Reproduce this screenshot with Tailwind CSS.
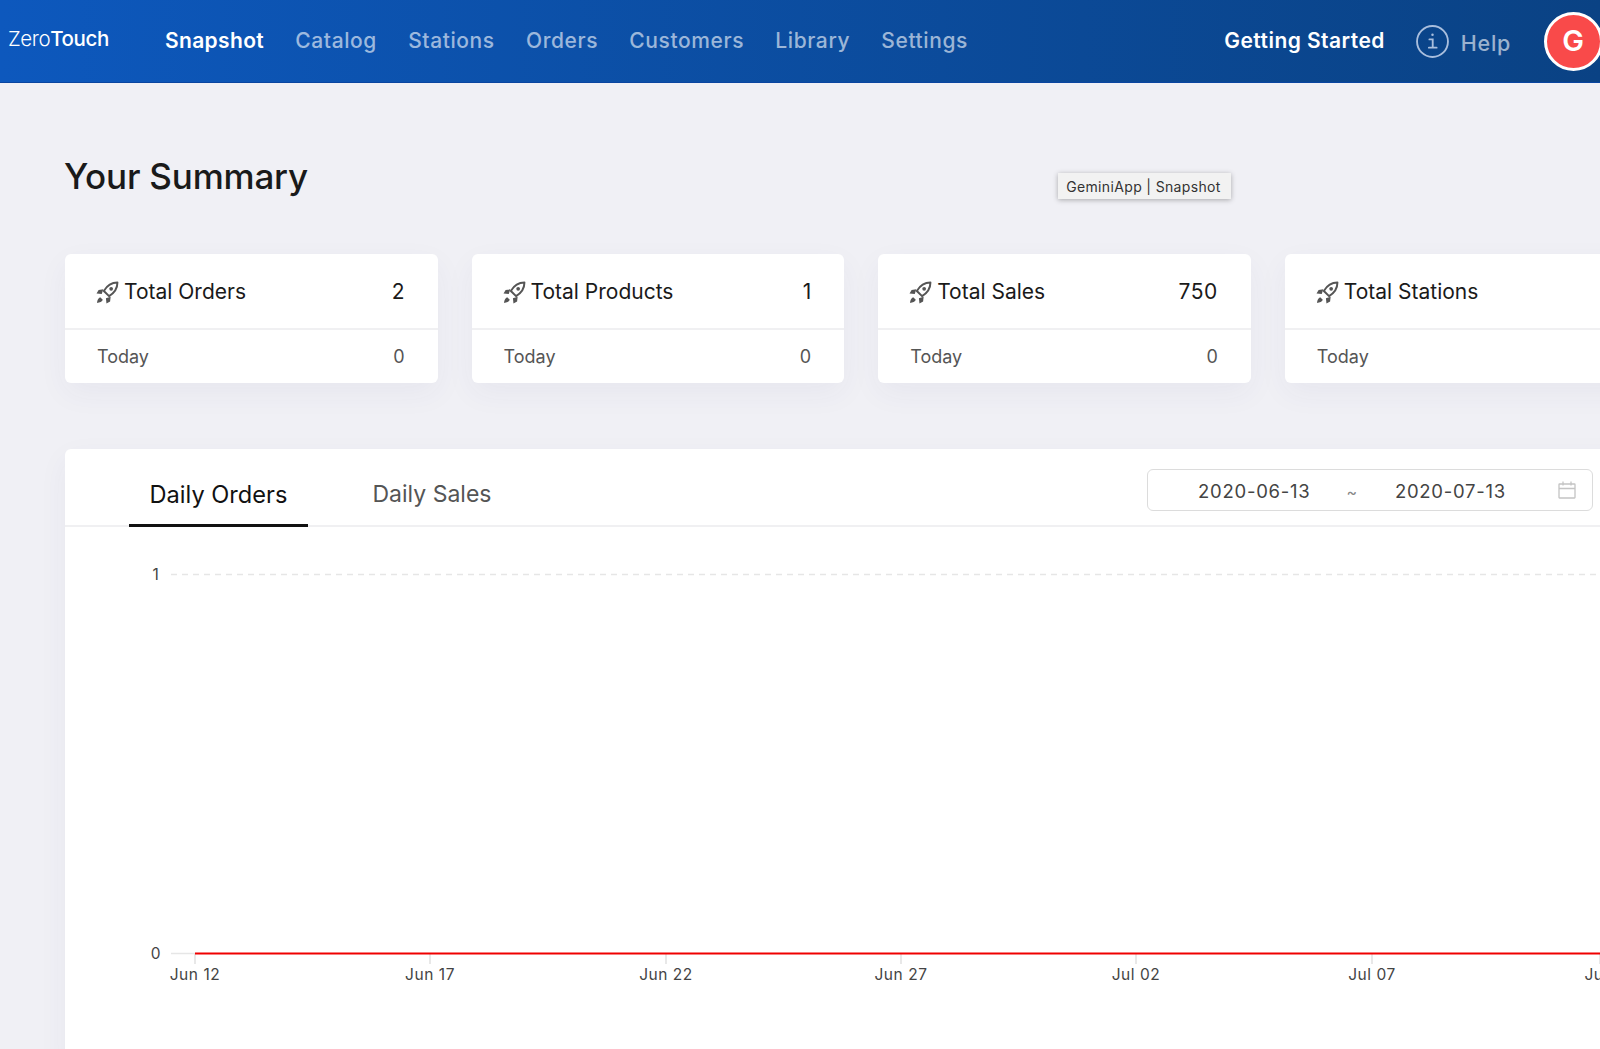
<!DOCTYPE html>
<html><head><meta charset="utf-8"><script src="https://cdn.jsdelivr.net/npm/@tailwindcss/browser@4"></script></head>
<body class="m-0 font-['Inter','Liberation_Sans',sans-serif]">
<div class="relative w-[1600px] h-[1049px] overflow-hidden bg-[#f0f0f5]">
  <header class="h-[83px] flex items-center pl-[8px] bg-gradient-to-r from-[#0d58bd] to-[#0a4284] border-b border-[#0a45a0]">
    <div class="w-[157px] shrink-0 text-[20.5px] text-white tracking-[-0.4px] leading-none -mt-[4px]"><span class="font-light">Zero</span><span class="font-medium">Touch</span></div>
    <nav class="flex items-center gap-[31.2px] text-[21px] font-medium tracking-[0.6px] text-white/60">
      <span class="text-white font-semibold tracking-[0.35px]">Snapshot</span><span>Catalog</span><span>Stations</span><span>Orders</span><span>Customers</span><span>Library</span><span>Settings</span>
    </nav>
    <div class="ml-auto flex items-center shrink-0 -mr-[3px]">
      <span class="text-[21px] font-semibold text-white tracking-[0.45px]">Getting Started</span>
      <svg class="ml-[31px]" width="33" height="33" viewBox="0 0 32 32" fill="none" stroke="#a9bedd" stroke-width="1.8"><circle cx="16" cy="16" r="15"/><path d="M13 14h3.2v8M12.5 22h7.5" stroke-linecap="round"/><circle cx="16" cy="9.5" r="1.2" fill="#a9bedd" stroke="none"/></svg>
      <span class="ml-[12px] mt-[4px] text-[21.5px] font-medium text-white/60 tracking-[0.7px]">Help</span>
      <div class="ml-[33px] w-[59px] h-[59px] pr-[1px] rounded-full border-[3px] border-white bg-[#f94a4a] flex items-center justify-center text-white text-[29px] font-semibold">G</div>
    </div>
  </header>

  <main class="pl-[65px]">
    <h1 class="pt-[70px] -ml-[1px] text-[35px] leading-[46px] font-medium text-[#1a1a1a] tracking-[-0.2px]">Your Summary</h1>
    <div class="absolute left-[1058px] top-[173px] h-[26px] w-[173px] pr-[2px] flex items-center justify-center bg-[#f2f2f2] shadow-[0_1px_5px_rgba(0,0,0,0.3)] text-[14px] text-[#333] tracking-[0.35px]">GeminiApp | Snapshot</div>

    <section class="mt-[55px] flex gap-[34px] w-[1700px]">
      <div class="w-[372.6px] h-[129px] shrink-0 bg-white rounded-[6px] shadow-[0_10px_30px_rgba(60,60,120,0.05)]">
        <div class="h-[76px] pt-[2px] border-b-2 border-[#f0f0f2] pl-[32px] pr-[33px] flex items-center justify-between text-[21px] text-[#1a1a1a]"><span class="flex items-center gap-[5px] -ml-[1px]"><svg width="23" height="23" viewBox="0 0 22 22" fill="#555"><path d="M20.5 1.5C15 1.5 10.5 4.5 7.5 9.5L12.5 14.5C17.5 11.5 20.5 7 20.5 1.5Z" fill="none" stroke="#555" stroke-width="1.9" stroke-linejoin="round"/><circle cx="14.5" cy="7.5" r="1.8"/><path d="M7 8 2.5 8.5.5 12 5.5 12.5ZM14 15 13.5 19.5 10 21.5 9.5 16.5ZM4 15.5C2.5 16 1 18.5 1 21 3.5 21 6 19.5 6.5 18Z"/></svg>Total Orders</span><span>2</span></div>
        <div class="h-[53px] pl-[32px] pr-[33px] flex items-center justify-between text-[18px] text-[#555]"><span>Today</span><span>0</span></div>
      </div>
      <div class="w-[372.6px] h-[129px] shrink-0 bg-white rounded-[6px] shadow-[0_10px_30px_rgba(60,60,120,0.05)]">
        <div class="h-[76px] pt-[2px] border-b-2 border-[#f0f0f2] pl-[32px] pr-[33px] flex items-center justify-between text-[21px] text-[#1a1a1a]"><span class="flex items-center gap-[5px] -ml-[1px]"><svg width="23" height="23" viewBox="0 0 22 22" fill="#555"><path d="M20.5 1.5C15 1.5 10.5 4.5 7.5 9.5L12.5 14.5C17.5 11.5 20.5 7 20.5 1.5Z" fill="none" stroke="#555" stroke-width="1.9" stroke-linejoin="round"/><circle cx="14.5" cy="7.5" r="1.8"/><path d="M7 8 2.5 8.5.5 12 5.5 12.5ZM14 15 13.5 19.5 10 21.5 9.5 16.5ZM4 15.5C2.5 16 1 18.5 1 21 3.5 21 6 19.5 6.5 18Z"/></svg>Total Products</span><span>1</span></div>
        <div class="h-[53px] pl-[32px] pr-[33px] flex items-center justify-between text-[18px] text-[#555]"><span>Today</span><span>0</span></div>
      </div>
      <div class="w-[372.6px] h-[129px] shrink-0 bg-white rounded-[6px] shadow-[0_10px_30px_rgba(60,60,120,0.05)]">
        <div class="h-[76px] pt-[2px] border-b-2 border-[#f0f0f2] pl-[32px] pr-[33px] flex items-center justify-between text-[21px] text-[#1a1a1a]"><span class="flex items-center gap-[5px] -ml-[1px]"><svg width="23" height="23" viewBox="0 0 22 22" fill="#555"><path d="M20.5 1.5C15 1.5 10.5 4.5 7.5 9.5L12.5 14.5C17.5 11.5 20.5 7 20.5 1.5Z" fill="none" stroke="#555" stroke-width="1.9" stroke-linejoin="round"/><circle cx="14.5" cy="7.5" r="1.8"/><path d="M7 8 2.5 8.5.5 12 5.5 12.5ZM14 15 13.5 19.5 10 21.5 9.5 16.5ZM4 15.5C2.5 16 1 18.5 1 21 3.5 21 6 19.5 6.5 18Z"/></svg>Total Sales</span><span class="tracking-[0.5px]">750</span></div>
        <div class="h-[53px] pl-[32px] pr-[33px] flex items-center justify-between text-[18px] text-[#555]"><span>Today</span><span>0</span></div>
      </div>
      <div class="w-[372.6px] h-[129px] shrink-0 bg-white rounded-[6px] shadow-[0_10px_30px_rgba(60,60,120,0.05)]">
        <div class="h-[76px] pt-[2px] border-b-2 border-[#f0f0f2] pl-[32px] pr-[33px] flex items-center justify-between text-[21px] text-[#1a1a1a]"><span class="flex items-center gap-[5px] -ml-[1px]"><svg width="23" height="23" viewBox="0 0 22 22" fill="#555"><path d="M20.5 1.5C15 1.5 10.5 4.5 7.5 9.5L12.5 14.5C17.5 11.5 20.5 7 20.5 1.5Z" fill="none" stroke="#555" stroke-width="1.9" stroke-linejoin="round"/><circle cx="14.5" cy="7.5" r="1.8"/><path d="M7 8 2.5 8.5.5 12 5.5 12.5ZM14 15 13.5 19.5 10 21.5 9.5 16.5ZM4 15.5C2.5 16 1 18.5 1 21 3.5 21 6 19.5 6.5 18Z"/></svg>Total Stations</span></div>
        <div class="h-[53px] pl-[32px] pr-[33px] flex items-center justify-between text-[18px] text-[#555]"><span>Today</span></div>
      </div>
    </section>

    <section class="mt-[66px] w-[1600px] h-[620px] bg-white rounded-[6px] shadow-[0_10px_30px_rgba(60,60,120,0.05)]">
      <div class="h-[78px] border-b-2 border-[#f0f0f2] pl-[64px] flex relative">
        <div class="w-[179px] h-[78px] border-b-[3px] border-[#111] flex items-center justify-center pt-[17px] text-[23.6px] text-[#111]">Daily Orders</div>
        <div class="ml-[64.5px] h-[78px] flex items-center pt-[13px] text-[23px] text-[#555]">Daily Sales</div>
        <div class="absolute left-[1082px] top-[20px] w-[446px] h-[42px] border-[1.5px] border-[#dcdcdc] rounded-[6px] flex items-center pt-[3px] text-[18.5px] text-[#444] tracking-[0.75px]">
          <span class="ml-[50px]">2020-06-13</span><span class="ml-[36px] text-[16px] text-[#888]">~</span><span class="ml-[37px]">2020-07-13</span>
          <svg class="ml-auto mr-[16px] -mt-[3px]" width="18" height="18" viewBox="0 0 18 18" fill="none" stroke="#c4c4c4" stroke-width="1.3"><rect x="1" y="3" width="16" height="14" rx="0.5"/><path d="M1 7.5h16M5 0.5v4M13 0.5v4"/></svg>
        </div>
      </div>
      <svg width="1535" height="522" viewBox="65 527 1535 522" class="block font-['Inter','Liberation_Sans',sans-serif]" fill="#444" font-size="15.5" letter-spacing="0.55">
        <path d="M171 574.5H1600" stroke="#e6e6e6" stroke-width="1.5" stroke-dasharray="6 5" fill="none"/>
        <path d="M171 953.5H195" stroke="#e6e6e6" stroke-width="1.5" fill="none"/>
        <path d="M195 954v10M430 954v10M666 954v10M901 954v10M1136 954v10M1372 954v10M1600 954v10" stroke="#e8e8e8" stroke-width="2" fill="none"/>
        <path d="M195 953.5H1600" stroke="#f00000" stroke-width="2" fill="none"/>
        <text x="156" y="580" text-anchor="middle">1</text>
        <text x="156" y="959" text-anchor="middle">0</text>
        <text x="195" y="980" text-anchor="middle">Jun 12</text>
        <text x="430" y="980" text-anchor="middle">Jun 17</text>
        <text x="666" y="980" text-anchor="middle">Jun 22</text>
        <text x="901" y="980" text-anchor="middle">Jun 27</text>
        <text x="1136" y="980" text-anchor="middle">Jul 02</text>
        <text x="1372" y="980" text-anchor="middle">Jul 07</text>
        <text x="1607" y="980" text-anchor="middle">Jul 12</text>
      </svg>
    </section>
  </main>
</div>
</body></html>
